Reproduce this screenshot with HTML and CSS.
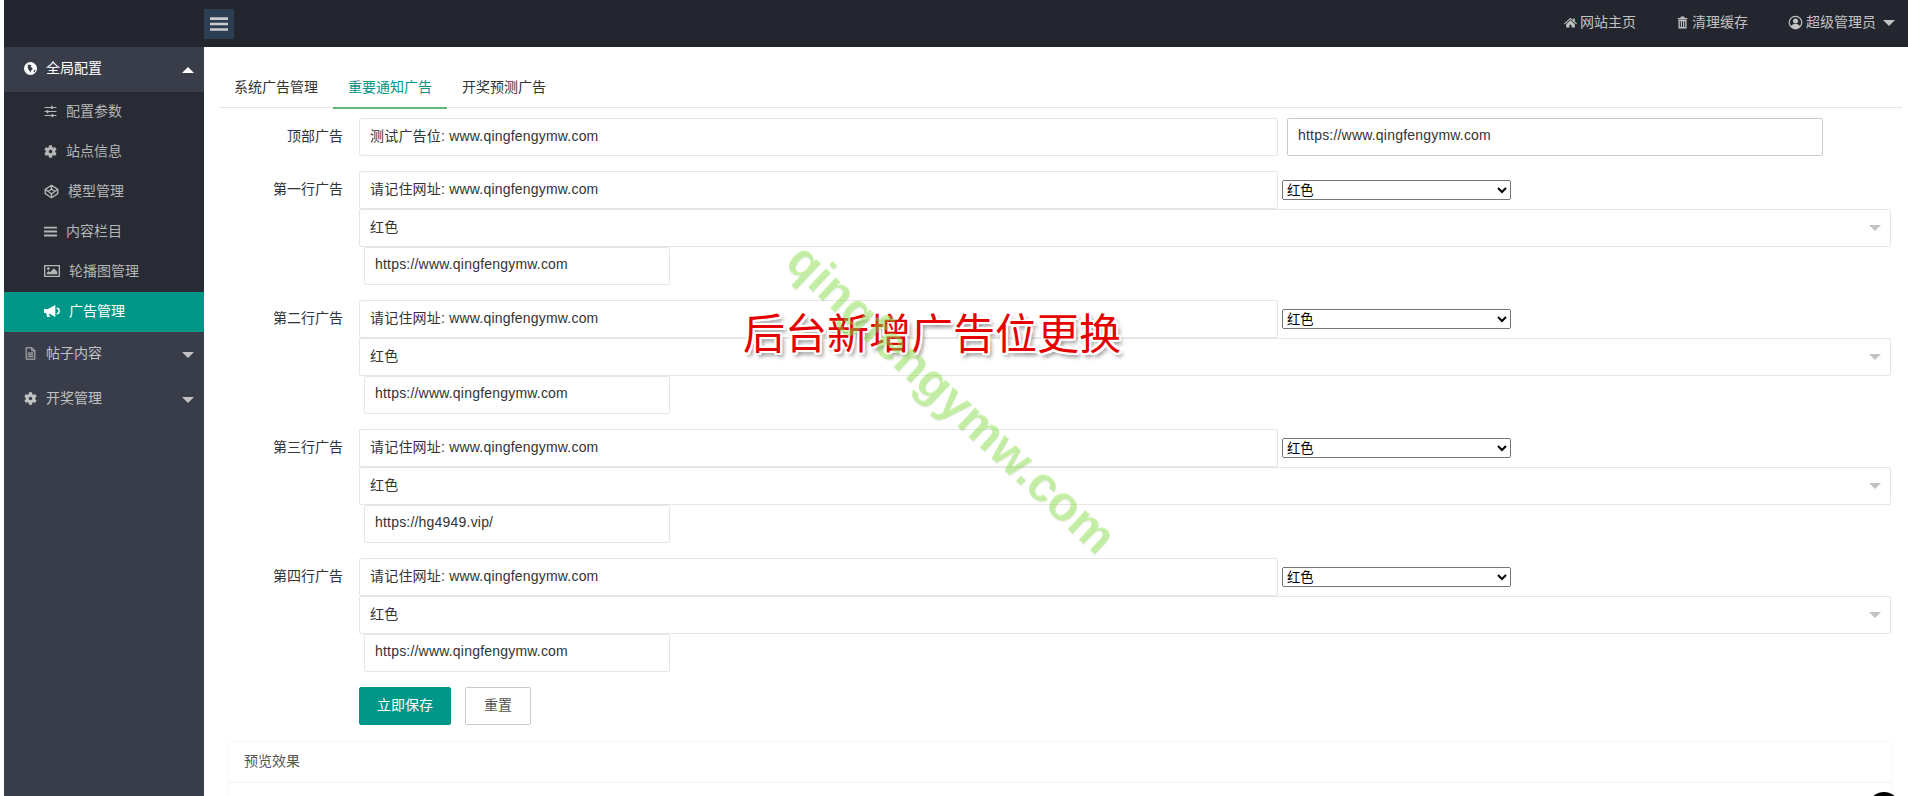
FILE: index.html

```html
<!DOCTYPE html>
<html lang="zh-CN">
<head>
  <meta charset="UTF-8">
  <title>广告管理</title>
  <link rel="stylesheet" href="styles.css">
</head>
<body>
  <svg class="defs" width="0" height="0">
    <symbol id="i-cog" viewBox="2 2 20 20"><path fill="currentColor" d="M19.14 12.94c.04-.3.06-.61.06-.94 0-.32-.02-.64-.07-.94l2.03-1.58c.18-.14.23-.41.12-.61l-1.92-3.32c-.12-.22-.37-.29-.59-.22l-2.39.96c-.5-.38-1.03-.7-1.62-.94l-.36-2.54c-.04-.24-.24-.41-.48-.41h-3.84c-.24 0-.43.17-.47.41l-.36 2.54c-.59.24-1.13.57-1.62.94l-2.39-.96c-.22-.08-.47 0-.59.22L2.74 8.87c-.12.21-.08.47.12.61l2.03 1.58c-.05.3-.09.63-.09.94s.02.64.07.94l-2.03 1.58c-.18.14-.23.41-.12.61l1.92 3.32c.12.22.37.29.59.22l2.39-.96c.5.38 1.03.7 1.62.94l.36 2.54c.05.24.24.41.48.41h3.84c.24 0 .44-.17.47-.41l.36-2.54c.59-.24 1.13-.56 1.62-.94l2.39.96c.22.08.47 0 .59-.22l1.92-3.32c.12-.22.07-.47-.12-.61l-2.01-1.58zM12 14.600c-1.430 0-2.600-1.170-2.600-2.600s1.170-2.600 2.600-2.600 2.600 1.170 2.600 2.600-1.170 2.600-2.600 2.600z"/></symbol>
    <symbol id="i-globe" viewBox="0 0 24 24"><path fill="currentColor" fill-rule="evenodd" d="M12 0a12 12 0 1 0 0 24 12 12 0 0 0 0-24zM7 5h5l2 2-2 2 3 1 1 3-3 3-1 4-2-4-2-2-1-3zM18 15l3-1-1 4-2 1z"/></symbol>
    <symbol id="i-sliders" viewBox="0 0 24 24"><path fill="currentColor" d="M1 3.500h12V1.500h3V3.500h7v2h-7v2h-3v-2H1zM1 11h4V9h3v2h15v2H8v2H5v-2H1zM1 18.500h13v-2h3v2h6v2h-6v2h-3v-2H1z"/></symbol>
    <symbol id="i-cube" viewBox="0 0 24 24"><g fill="none" stroke="currentColor" stroke-width="2.200" stroke-linejoin="round"><path d="M12 2l10 6.500v7L12 22 2 15.500v-7z"/><path d="M12 8l5 4-5 4-5-4z"/><path d="M12 2v6M12 16v6M2 8.500L7 12M22 8.500L17 12"/></g></symbol>
    <symbol id="i-bars" viewBox="0 0 24 24"><path fill="currentColor" d="M0 3h24v3.500H0zM0 10.250h24v3.500H0zM0 17.500h24V21H0z"/></symbol>
    <symbol id="i-image" viewBox="0 0 24 20"><path fill="currentColor" fill-rule="evenodd" d="M0 1h24v18H0zM2 3v14h20V3z"/><path fill="currentColor" d="M4 15v-2l3-3 2 2 6-6 5 5v4z"/><circle fill="currentColor" cx="6.500" cy="6.500" r="2"/></symbol>
    <symbol id="i-bullhorn" viewBox="0 0 24 20"><path fill="currentColor" d="M0 7h6L17 1v18L7 13.500l2 5.500H5l-2-6H0z"/><path fill="none" stroke="currentColor" stroke-width="2.200" d="M19 6c3 0 3.800 2 3.800 4s-.8 4-3.800 4"/></symbol>
    <symbol id="i-file" viewBox="0 0 20 24"><g fill="none" stroke="currentColor" stroke-width="1.800"><path d="M2 1.500h11l5 5v16H2z"/><path d="M12.500 1.500v5.500H18M5 11h10M5 14.500h10M5 18h10"/></g></symbol>
    <symbol id="i-home" viewBox="0 0 24 24"><path fill="currentColor" d="M12 3l5 4.500V4.500h3v5.700l4 3.500-1.500 1.500L12 6 1.500 15.200 0 13.700zM12 8l8 7v6h-6v-5h-4v5H4v-6z"/></symbol>
    <symbol id="i-trash" viewBox="0 0 20 24"><path fill="currentColor" fill-rule="evenodd" d="M7 1h6l1 2.500h5v2.500H1V3.500h5zM2.500 7h15v16h-15zM5 9.500V20.500h2V9.500zM9 9.500V20.500h2V9.500zM13 9.500V20.500h2V9.500z"/></symbol>
    <symbol id="i-user" viewBox="0 0 24 24"><path fill="currentColor" fill-rule="evenodd" d="M12 1a11 11 0 1 0 0 22 11 11 0 0 0 0-22zM12 3a9 9 0 0 1 7 14.600c-1.500-2.200-4-3.100-7-3.100s-5.500.9-7 3.100A9 9 0 0 1 12 3z"/><circle fill="currentColor" cx="12" cy="9.500" r="4"/></symbol>
  </svg>

  <div class="app">
    <header class="topbar">
      <button class="menu-btn"><svg class="menu-icon"><use href="#i-bars"/></svg></button>
      <nav class="top-links">
        <a><svg class="icon-sm"><use href="#i-home"/></svg>网站主页</a>
        <a><svg class="icon-sm"><use href="#i-trash"/></svg>清理缓存</a>
        <a class="user"><svg class="icon-user"><use href="#i-user"/></svg>超级管理员<i class="caret-down top-caret"></i></a>
      </nav>
    </header>

    <aside class="sidebar">
      <div class="nav-item on"><svg class="icon"><use href="#i-globe"/></svg>全局配置<i class="caret-up"></i></div>
      <div class="sub-nav">
        <div class="sub-item"><svg class="icon"><use href="#i-sliders"/></svg>配置参数</div>
        <div class="sub-item"><svg class="icon"><use href="#i-cog"/></svg>站点信息</div>
        <div class="sub-item"><svg class="icon wide"><use href="#i-cube"/></svg>模型管理</div>
        <div class="sub-item"><svg class="icon"><use href="#i-bars"/></svg>内容栏目</div>
        <div class="sub-item"><svg class="icon wider"><use href="#i-image"/></svg>轮播图管理</div>
        <div class="sub-item active"><svg class="icon wider"><use href="#i-bullhorn"/></svg>广告管理</div>
      </div>
      <div class="nav-item"><svg class="icon"><use href="#i-file"/></svg>帖子内容<i class="caret-down"></i></div>
      <div class="nav-item"><svg class="icon"><use href="#i-cog"/></svg>开奖管理<i class="caret-down"></i></div>
    </aside>

    <main class="content">
      <ul class="tabs">
        <li>系统广告管理</li>
        <li class="current">重要通知广告</li>
        <li>开奖预测广告</li>
      </ul>

      <form class="ad-form">
        <div class="form-row top-row">
          <label>顶部广告</label>
          <div class="fields">
            <input class="txt main" value="测试广告位: www.qingfengymw.com">
            <input class="txt link" value="https://www.qingfengymw.com">
          </div>
        </div>

        <div class="form-row">
          <label>第一行广告</label>
          <div class="fields">
            <input class="txt main" value="请记住网址: www.qingfengymw.com">
            <select class="native"><option>红色</option></select>
            <div class="fake-select"><input class="txt" value="红色"><i class="caret-gray"></i></div>
            <input class="txt url" value="https://www.qingfengymw.com">
          </div>
        </div>

        <div class="form-row">
          <label>第二行广告</label>
          <div class="fields">
            <input class="txt main" value="请记住网址: www.qingfengymw.com">
            <select class="native"><option>红色</option></select>
            <div class="fake-select"><input class="txt" value="红色"><i class="caret-gray"></i></div>
            <input class="txt url" value="https://www.qingfengymw.com">
          </div>
        </div>

        <div class="form-row">
          <label>第三行广告</label>
          <div class="fields">
            <input class="txt main" value="请记住网址: www.qingfengymw.com">
            <select class="native"><option>红色</option></select>
            <div class="fake-select"><input class="txt" value="红色"><i class="caret-gray"></i></div>
            <input class="txt url" value="https://hg4949.vip/">
          </div>
        </div>

        <div class="form-row">
          <label>第四行广告</label>
          <div class="fields">
            <input class="txt main" value="请记住网址: www.qingfengymw.com">
            <select class="native"><option>红色</option></select>
            <div class="fake-select"><input class="txt" value="红色"><i class="caret-gray"></i></div>
            <input class="txt url" value="https://www.qingfengymw.com">
          </div>
        </div>

        <div class="form-actions">
          <button type="button" class="btn primary">立即保存</button>
          <button type="button" class="btn plain">重置</button>
        </div>
      </form>

      <section class="preview">
        <div class="preview-head">预览效果</div>
      </section>
    </main>
  </div>

  <div class="stamp">后台新增广告位更换</div>
  <div class="mark">qingfengymw.com</div>
  <div class="corner-dot"></div>
</body>
</html>
```

FILE: styles.css

```css
html, body {
  height: 100%;
  margin: 0;
  overflow: hidden;
}
body {
  position: relative;
  background: #fff;
  font: 14px/1.5 "Liberation Sans", "Noto Sans CJK SC", sans-serif;
  color: #333;
}
.defs {
  position: absolute;
}
.app {
  display: grid;
  grid-template-columns: 200px 1fr;
  grid-template-rows: 47px 1fr;
  height: 796px;
  margin-left: 4px;
}

/* top bar */
.topbar {
  grid-column: 1 / 3;
  display: flex;
  align-items: center;
  justify-content: space-between;
  padding-left: 200px;
  background: #23262e;
}
.menu-btn {
  display: flex;
  align-items: center;
  justify-content: center;
  width: 30px;
  height: 30px;
  padding: 0;
  border: none;
  background: #2c3e54;
  color: #ccc;
}
.menu-icon {
  width: 18px;
  height: 20px;
}
.top-links {
  display: flex;
  align-items: center;
  padding-right: 13px;
  color: #c2c2c2;
}
.top-links a {
  display: flex;
  align-items: center;
  margin-left: 40px;
  padding-bottom: 2px;
}
.icon-sm {
  width: 13px;
  height: 13px;
  margin-right: 3px;
}
.icon-user {
  width: 15px;
  height: 15px;
  margin-right: 3px;
}
.top-caret {
  margin-left: 7px;
  border-top-color: #c2c2c2;
}

/* side menu */
.sidebar {
  background: #393d49;
  color: #c2c2c2;
}
.nav-item {
  position: relative;
  box-sizing: border-box;
  display: flex;
  align-items: center;
  height: 45px;
  padding: 0 0 2px 20px;
}
.nav-item.on {
  color: #fff;
}
.sub-nav {
  background: #282b33;
}
.sub-item {
  box-sizing: border-box;
  display: flex;
  align-items: center;
  height: 40px;
  padding: 0 0 2px 40px;
  color: #b5b5b5;
}
.sub-item.active {
  background: #009688;
  color: #fff;
}
.icon {
  flex: none;
  width: 13px;
  height: 13px;
  margin-right: 9px;
}
.icon.wide {
  width: 15px;
  height: 15px;
  margin-right: 9px;
}
.icon.wider {
  width: 16px;
  height: 14px;
  margin-right: 9px;
}
.caret-up,
.caret-down {
  width: 0;
  height: 0;
  border-left: 6px solid transparent;
  border-right: 6px solid transparent;
}
.caret-up {
  border-bottom: 6px solid #fff;
}
.caret-down {
  border-top: 6px solid #c2c2c2;
}
.nav-item .caret-up,
.nav-item .caret-down {
  position: absolute;
  right: 10px;
  top: 20px;
}

/* content */
.content {
  padding: 20px 6px 0 15px;
  overflow: hidden;
}
.tabs {
  display: flex;
  height: 40px;
  margin: 0;
  padding: 0;
  list-style: none;
  border-bottom: 1px solid #e6e6e6;
}
.tabs li {
  padding: 0 15px;
  line-height: 40px;
}
.tabs .current {
  height: 40px;
  color: #009688;
  border-bottom: 2px solid #5fb878;
}
.ad-form {
  margin-top: 10px;
}
.form-row {
  display: flex;
  margin-bottom: 15px;
}
.form-row label {
  flex: none;
  width: 124px;
  padding-right: 16px;
  line-height: 36px;
  text-align: right;
}
.fields {
  display: flex;
  flex-wrap: wrap;
  align-items: center;
  width: 1532px;
}
.txt {
  box-sizing: border-box;
  height: 38px;
  padding: 0 10px 4px;
  border: 1px solid #e6e6e6;
  border-radius: 2px;
  background: #fff;
  color: #333;
  font: inherit;
  letter-spacing: .2px;
}
.txt.main {
  width: 919px;
}
.txt.link {
  width: 536px;
  margin-left: 9px;
  border-color: #c9c9c9;
}
.native {
  width: 229px;
  height: 20px;
  margin-left: 4px;
  font-family: "Liberation Sans", "Noto Sans CJK SC", sans-serif;
}
.fake-select {
  position: relative;
  width: 100%;
}
.fake-select .txt {
  display: block;
  width: 100%;
}
.caret-gray {
  position: absolute;
  right: 10px;
  top: 16px;
  border-left: 6px solid transparent;
  border-right: 6px solid transparent;
  border-top: 6px solid #c2c2c2;
}
.txt.url {
  width: 306px;
  margin-left: 5px;
}
.form-actions {
  display: flex;
  gap: 14px;
  margin-left: 140px;
}
.btn {
  box-sizing: border-box;
  height: 38px;
  padding: 0 0 2px;
  border: 1px solid #c9c9c9;
  border-radius: 2px;
  background: #fff;
  color: #555;
  font: inherit;
}
.btn.primary {
  width: 92px;
  border-color: #009688;
  background: #009688;
  color: #fff;
}
.btn.plain {
  width: 66px;
}
.preview {
  box-sizing: border-box;
  width: 1664px;
  height: 80px;
  margin: 16px 0 0 9px;
  border: 1px solid #f8f8f8;
}
.preview-head {
  box-sizing: border-box;
  height: 41px;
  padding: 0 15px;
  line-height: 38px;
  color: #555;
  border-bottom: 1px solid #f2f2f2;
}

/* pasted over the screenshot */
.stamp {
  position: absolute;
  left: 743px;
  top: 306px;
  color: #e60000;
  font: 42px/50px "Noto Sans CJK SC", sans-serif;
  white-space: nowrap;
  text-shadow: 2px 0 0 #fff, -2px 0 0 #fff, 0 2px 0 #fff, 0 -2px 0 #fff, 2px 2px 0 #fff, -2px -2px 0 #fff, 2px -2px 0 #fff, -2px 2px 0 #fff, 3px 4px 4px #777;
}
.mark {
  position: absolute;
  left: 722px;
  top: 360px;
  width: 460px;
  text-align: center;
  color: rgba(140, 230, 70, .45);
  font: bold 49px/76px "Liberation Sans", sans-serif;
  white-space: nowrap;
  transform: rotate(43deg);
  text-shadow: 1px 1px 1px rgba(0, 0, 0, .06);
}
.corner-dot {
  position: absolute;
  left: 1868px;
  top: 792px;
  width: 32px;
  height: 32px;
  border-radius: 50%;
  background: #000;
}
```
